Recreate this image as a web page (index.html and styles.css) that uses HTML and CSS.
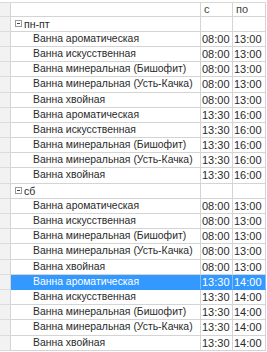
FILE: index.html
```html
<!DOCTYPE html>
<html lang="ru">
<head>
<meta charset="utf-8">
<link rel="stylesheet" href="styles.css">
</head>
<body>
<div class="grid">
  <div class="row head"><div class="ind"></div><div class="c name"></div><div class="c t">с</div><div class="c t">по</div></div>

  <div class="row group"><div class="ind"></div><div class="c gname"><span class="box"></span>пн-пт</div><div class="c t"></div><div class="c t"></div></div>
  <div class="row"><div class="ind"></div><div class="c name">Ванна ароматическая</div><div class="c t">08:00</div><div class="c t">13:00</div></div>
  <div class="row"><div class="ind"></div><div class="c name">Ванна искусственная</div><div class="c t">08:00</div><div class="c t">13:00</div></div>
  <div class="row"><div class="ind"></div><div class="c name">Ванна минеральная (Бишофит)</div><div class="c t">08:00</div><div class="c t">13:00</div></div>
  <div class="row"><div class="ind"></div><div class="c name">Ванна минеральная (Усть-Качка)</div><div class="c t">08:00</div><div class="c t">13:00</div></div>
  <div class="row"><div class="ind"></div><div class="c name">Ванна хвойная</div><div class="c t">08:00</div><div class="c t">13:00</div></div>
  <div class="row"><div class="ind"></div><div class="c name">Ванна ароматическая</div><div class="c t">13:30</div><div class="c t">16:00</div></div>
  <div class="row"><div class="ind"></div><div class="c name">Ванна искусственная</div><div class="c t">13:30</div><div class="c t">16:00</div></div>
  <div class="row"><div class="ind"></div><div class="c name">Ванна минеральная (Бишофит)</div><div class="c t">13:30</div><div class="c t">16:00</div></div>
  <div class="row"><div class="ind"></div><div class="c name">Ванна минеральная (Усть-Качка)</div><div class="c t">13:30</div><div class="c t">16:00</div></div>
  <div class="row"><div class="ind"></div><div class="c name">Ванна хвойная</div><div class="c t">13:30</div><div class="c t">16:00</div></div>

  <div class="row group"><div class="ind"></div><div class="c gname"><span class="box"></span>сб</div><div class="c t"></div><div class="c t"></div></div>
  <div class="row"><div class="ind"></div><div class="c name">Ванна ароматическая</div><div class="c t">08:00</div><div class="c t">13:00</div></div>
  <div class="row"><div class="ind"></div><div class="c name">Ванна искусственная</div><div class="c t">08:00</div><div class="c t">13:00</div></div>
  <div class="row"><div class="ind"></div><div class="c name">Ванна минеральная (Бишофит)</div><div class="c t">08:00</div><div class="c t">13:00</div></div>
  <div class="row"><div class="ind"></div><div class="c name">Ванна минеральная (Усть-Качка)</div><div class="c t">08:00</div><div class="c t">13:00</div></div>
  <div class="row"><div class="ind"></div><div class="c name">Ванна хвойная</div><div class="c t">08:00</div><div class="c t">13:00</div></div>
  <div class="row sel"><div class="ind"></div><div class="c name">Ванна ароматическая</div><div class="c t">13:30</div><div class="c t">14:00</div></div>
  <div class="row"><div class="ind"></div><div class="c name">Ванна искусственная</div><div class="c t">13:30</div><div class="c t">14:00</div></div>
  <div class="row"><div class="ind"></div><div class="c name">Ванна минеральная (Бишофит)</div><div class="c t">13:30</div><div class="c t">14:00</div></div>
  <div class="row"><div class="ind"></div><div class="c name">Ванна минеральная (Усть-Качка)</div><div class="c t">13:30</div><div class="c t">14:00</div></div>
  <div class="row"><div class="ind"></div><div class="c name">Ванна хвойная</div><div class="c t">13:30</div><div class="c t">14:00</div></div>
</div>
</body>
</html>
```

FILE: styles.css
```css
html, body {
  margin: 0;
  padding: 0;
  background: #ffffff;
}
body {
  font-family: "Liberation Sans", Arial, sans-serif;
  font-size: 11px;
  color: #2a2a2a;
  width: 267px;
  height: 352px;
  overflow: hidden;
}
.grid {
  width: 266px;
  padding-top: 2px;
  background: #ffffff;
}
.row {
  display: grid;
  grid-template-columns: 11px 190px 32px 33px;
  height: 15.2px;
  line-height: 14px;
}
.head {
  line-height: 12px;
  border-top: 1px solid #d9d9d9;
  box-sizing: border-box;
  height: 14.6px;
}
.ind {
  background: #f2f2f2;
  border-right: 1px solid #d4d4d4;
  border-bottom: 1px solid #dcdcdc;
}
.c {
  border-right: 1px solid #d4d4d4;
  border-bottom: 1px solid #d4d4d4;
  white-space: nowrap;
  overflow: hidden;
}
.name {
  padding-left: 22px;
  font-size: 10.4px;
}
.t {
  padding-left: 1px;
}
.head .t {
  padding-left: 3px;
  color: #444;
}
.gname {
  padding-left: 4px;
  display: flex;
  align-items: center;
  gap: 2px;
  font-size: 10.6px;
}
.box {
  width: 5px;
  height: 5px;
  border: 1px solid #9a9a9a;
  position: relative;
  background: #fff;
  flex: none;
}
.box::after {
  content: "";
  position: absolute;
  left: 1px;
  right: 1px;
  top: 2px;
  height: 1px;
  background: #444;
}
.sel .c {
  background: #3399ff;
  color: #ffffff;
  border-right-color: #7fbcff;
  border-bottom-color: #3399ff;
}
```
